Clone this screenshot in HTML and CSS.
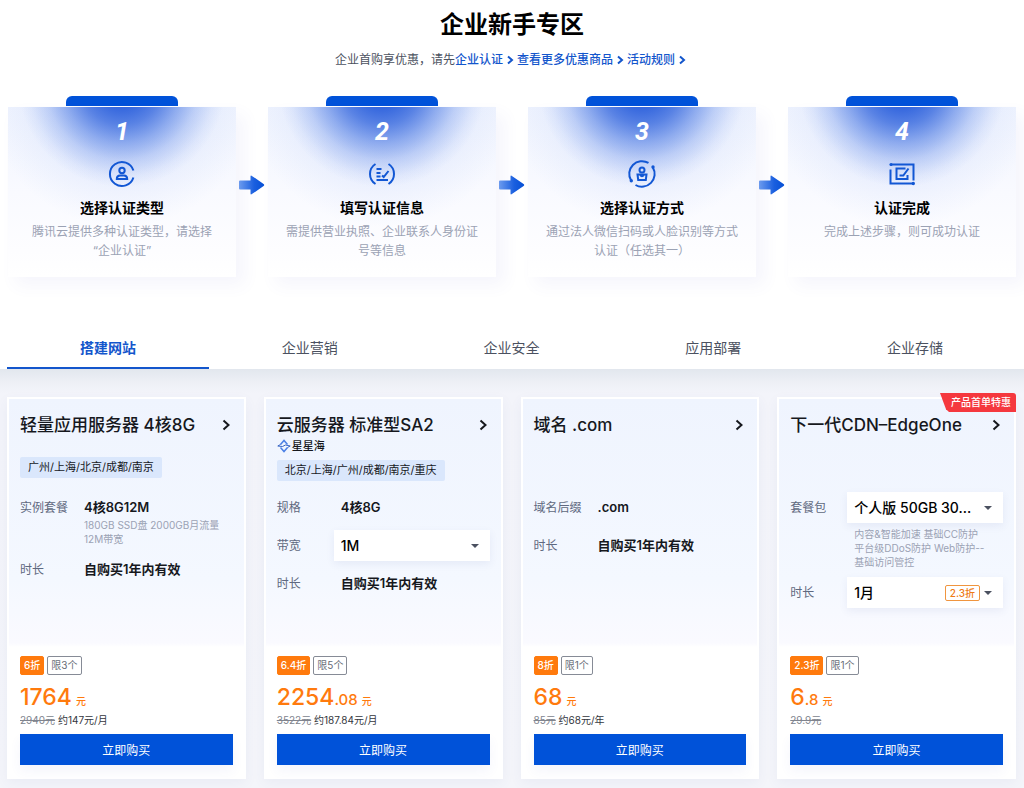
FILE: index.html
```html
<!DOCTYPE html>
<html lang="zh-CN">
<head>
<meta charset="utf-8">
<meta name="viewport" content="width=device-width, initial-scale=1">
<title>企业新手专区</title>
<link rel="stylesheet" href="styles.css">
</head>
<body>
<header class="intro">
  <h1 class="intro-title">企业新手专区</h1>
  <p class="intro-text">企业首购享优惠，请先<a class="link" href="#">企业认证<svg class="link-arrow" viewBox="0 0 12 10"><path d="M4 1.5 8 5 4 8.5"/></svg></a><a class="link" href="#">查看更多优惠商品<svg class="link-arrow" viewBox="0 0 12 10"><path d="M4 1.5 8 5 4 8.5"/></svg></a><a class="link" href="#">活动规则<svg class="link-arrow" viewBox="0 0 12 10"><path d="M4 1.5 8 5 4 8.5"/></svg></a></p>
</header>

<svg class="defs" width="0" height="0" aria-hidden="true">
  <defs>
    <linearGradient id="arrow-fill" x1="0" x2="1" y1="0" y2="0">
      <stop offset="0" stop-color="#6c9bee"/><stop offset=".6" stop-color="#1a5fdf"/><stop offset="1" stop-color="#0650d6"/>
    </linearGradient>
    <symbol id="arrow" viewBox="0 0 26 20">
      <path fill="url(#arrow-fill)" d="M1 5.500h10.500V1.600q0-1.700 1.400-.7l11.700 8.200q1.200.9 0 1.800l-11.700 8.200q-1.400 1-1.400-.7V14.500H1q-1 0-1-1v-7q0-1 1-1z"/>
    </symbol>
  </defs>
</svg>

<ol class="steps">
  <li class="step">
    <div class="step-tab"></div>
    <div class="step-card">
      <span class="step-num">1</span>
      <svg class="step-icon" viewBox="0 0 26 26"><path d="M24.400 9.500A12 12 0 1 0 24.400 16.500"/><circle cx="13" cy="9.500" r="2.700"/><path d="M7.800 18q0-3.600 3.200-3.600h4q3.200 0 3.200 3.600z"/></svg>
      <h2 class="step-title">选择认证类型</h2>
      <p class="step-text">腾讯云提供多种认证类型，请选择“企业认证”</p>
    </div>
  </li>
  <li class="step-arrow" aria-hidden="true"><svg width="26" height="20"><use href="#arrow"/></svg></li>
  <li class="step">
    <div class="step-tab"></div>
    <div class="step-card">
      <span class="step-num">2</span>
      <svg class="step-icon" viewBox="0 0 26 26"><path d="M6.500 3Q1 6.500 1 13t5.500 10M19.500 3Q25 6.500 25 13t-5.500 10M7.500 8h5M7.500 12h4M7.500 15.500h4M7.500 19h11.500M13 14.500l1.700 1.500L19.500 10"/></svg>
      <h2 class="step-title">填写认证信息</h2>
      <p class="step-text">需提供营业执照、企业联系人身份证号等信息</p>
    </div>
  </li>
  <li class="step-arrow" aria-hidden="true"><svg width="26" height="20"><use href="#arrow"/></svg></li>
  <li class="step">
    <div class="step-tab"></div>
    <div class="step-card">
      <span class="step-num">3</span>
      <svg class="step-icon" viewBox="0 0 26 26"><path d="M19.500 1.900A12.800 12.800 0 0 0 2.100 19.600M23.900 6.400A12.800 12.800 0 0 1 6.500 24"/><circle class="dot" cx="24" cy="6" r="1.700"/><circle class="dot" cx="2.300" cy="19.800" r="1.700"/><circle cx="13" cy="9" r="2.500"/><path d="M8.500 13.500h9l-.7 5.500H9.200zM11 13.500q2 3.400 4 0"/></svg>
      <h2 class="step-title">选择认证方式</h2>
      <p class="step-text">通过法人微信扫码或人脸识别等方式认证（任选其一）</p>
    </div>
  </li>
  <li class="step-arrow" aria-hidden="true"><svg width="26" height="20"><use href="#arrow"/></svg></li>
  <li class="step">
    <div class="step-tab"></div>
    <div class="step-card">
      <span class="step-num">4</span>
      <svg class="step-icon" viewBox="0 0 26 26"><path d="M2 3.500h22.500v16M24 22.500H1.500V8.500"/><circle class="dot" cx="2" cy="3.500" r="1.600"/><circle class="dot" cx="24.300" cy="22.500" r="1.700"/><path d="M16.500 7.500H7.500v10.500h11V14M10.500 14.500h3.800l5.200-7"/></svg>
      <h2 class="step-title">认证完成</h2>
      <p class="step-text">完成上述步骤，则可成功认证</p>
    </div>
  </li>
</ol>

<nav class="tabs">
  <a class="tab tab-active" href="#">搭建网站</a>
  <a class="tab" href="#">企业营销</a>
  <a class="tab" href="#">企业安全</a>
  <a class="tab" href="#">应用部署</a>
  <a class="tab" href="#">企业存储</a>
</nav>

<main class="products">
  <article class="card">
    <div class="card-head">
      <h3 class="card-title"><a href="#">轻量应用服务器 4核8G<svg class="chevron" viewBox="0 0 14 14"><path d="M4.500 2.500 9.500 7l-5 4.500"/></svg></a></h3>
      <span class="regions">广州/上海/北京/成都/南京</span>
    </div>
    <dl class="specs">
      <div class="spec"><dt>实例套餐</dt><dd>4核8G12M<p class="note note-tight">180GB SSD盘 2000GB月流量12M带宽</p></dd></div>
      <div class="spec"><dt>时长</dt><dd>自购买1年内有效</dd></div>
    </dl>
    <div class="badges"><span class="badge badge-off">6折</span><span class="badge">限3个</span></div>
    <p class="price"><span>1764</span><small class="unit">元</small></p>
    <p class="was"><s>2940元</s> 约147元/月</p>
    <button class="buy" type="button">立即购买</button>
  </article>

  <article class="card">
    <div class="card-head">
      <h3 class="card-title"><a href="#">云服务器 标准型SA2<svg class="chevron" viewBox="0 0 14 14"><path d="M4.500 2.500 9.500 7l-5 4.500"/></svg></a></h3>
      <p class="series"><svg class="series-icon" viewBox="0 0 14 14"><path d="M3.500 5.500 7 1.500l3.500 4M3.500 8.500 7 12.500l3.500-4"/><path class="series-orbit" d="M3.500 5.500.8 7l4.700.5 3-1.500 4.700 1-2.700 1.500"/></svg>星星海</p>
      <span class="regions">北京/上海/广州/成都/南京/重庆</span>
    </div>
    <dl class="specs">
      <div class="spec"><dt>规格</dt><dd>4核8G</dd></div>
      <div class="spec"><dt><label for="bandwidth">带宽</label></dt><dd><div class="picker"><select id="bandwidth"><option>1M</option></select></div></dd></div>
      <div class="spec"><dt>时长</dt><dd>自购买1年内有效</dd></div>
    </dl>
    <div class="badges"><span class="badge badge-off">6.4折</span><span class="badge">限5个</span></div>
    <p class="price"><span>2254<span class="cents">.08</span></span><small class="unit">元</small></p>
    <p class="was"><s>3522元</s> 约187.84元/月</p>
    <button class="buy" type="button">立即购买</button>
  </article>

  <article class="card">
    <div class="card-head">
      <h3 class="card-title"><a href="#">域名 .com<svg class="chevron" viewBox="0 0 14 14"><path d="M4.500 2.500 9.500 7l-5 4.500"/></svg></a></h3>
    </div>
    <dl class="specs">
      <div class="spec"><dt>域名后缀</dt><dd>.com</dd></div>
      <div class="spec"><dt>时长</dt><dd>自购买1年内有效</dd></div>
    </dl>
    <div class="badges"><span class="badge badge-off">8折</span><span class="badge">限1个</span></div>
    <p class="price"><span>68</span><small class="unit">元</small></p>
    <p class="was"><s>85元</s> 约68元/年</p>
    <button class="buy" type="button">立即购买</button>
  </article>

  <article class="card">
    <span class="ribbon">产品首单特惠</span>
    <div class="card-head">
      <h3 class="card-title"><a href="#">下一代CDN–EdgeOne<svg class="chevron" viewBox="0 0 14 14"><path d="M4.500 2.500 9.500 7l-5 4.500"/></svg></a></h3>
    </div>
    <dl class="specs">
      <div class="spec"><dt><label for="plan">套餐包</label></dt><dd><div class="picker"><select id="plan"><option>个人版 50GB 30...</option></select></div><p class="note">内容&amp;智能加速 基础CC防护<br>平台级DDoS防护 Web防护--<br>基础访问管控</p></dd></div>
      <div class="spec"><dt><label for="term">时长</label></dt><dd><div class="picker"><select id="term"><option>1月</option></select><span class="picker-tag">2.3折</span></div></dd></div>
    </dl>
    <div class="badges"><span class="badge badge-off">2.3折</span><span class="badge">限1个</span></div>
    <p class="price"><span>6<span class="cents">.8</span></span><small class="unit">元</small></p>
    <p class="was"><s>29.9元</s></p>
    <button class="buy" type="button">立即购买</button>
  </article>
</main>
</body>
</html>
```
FILE: styles.css
```css
:root {
  --blue: #0052d9;
  --orange: #ff7a0d;
  --ink: #16181d;
  --muted: #9ba2b4;
}

* { box-sizing: border-box; }

body {
  display: flex;
  flex-direction: column;
  min-height: 100vh;
  margin: 0;
  background: #fff;
  color: var(--ink);
  font-family: Inter, "Noto Sans CJK SC", sans-serif;
  font-size: 12px;
}

h1, h2, h3, p, ol, dl, dd { margin: 0; padding: 0; }
a { color: inherit; text-decoration: none; }
.defs { position: absolute; }

/* Intro */
.intro { padding-top: 8px; text-align: center; }
.intro-title { color: #000; font-size: 24px; line-height: 34px; font-weight: 700; }
.intro-text { margin-top: 8px; line-height: 20px; color: #4b5160; }
.link { color: #1356cc; font-weight: 500; }
.link-arrow { width: 14px; height: 10px; vertical-align: -1px; fill: none; stroke: currentColor; stroke-width: 2; }

/* Steps */
.steps { display: flex; margin-top: 26px; padding: 0 8px; list-style: none; }
.step { flex: 1; display: flex; flex-direction: column; align-items: center; gap: 1px; }
.step-tab { width: 112px; height: 10px; border-radius: 6px 6px 0 0; background: var(--blue); }
.step-card {
  display: flex;
  flex-direction: column;
  align-items: center;
  width: 100%;
  min-height: 170px;
  padding: 13px 16px 16px;
  background:
    radial-gradient(ellipse 104px 104px at 50% -24px, #2a5fdc 0%, #3668de 24%, rgba(54, 104, 222, .78) 40%, rgba(60, 110, 225, .48) 58%, rgba(70, 118, 228, .24) 74%, rgba(80, 125, 230, .07) 90%, rgba(80, 125, 230, 0) 100%),
    radial-gradient(ellipse 130px 120px at 50% 0, rgba(130, 162, 240, .34), rgba(150, 178, 245, .14) 60%, rgba(190, 206, 250, 0)),
    linear-gradient(#f0f4fe, #f9faff 50%, #fdfdff 85%, #fff);
  box-shadow: 8px 8px 16px rgba(90, 90, 200, .06);
  text-align: center;
}
.step-num { color: #fff; font-family: Roboto, sans-serif; font-size: 25px; line-height: 24px; font-weight: 700; font-style: italic; }
.step-icon { width: 26px; height: 26px; margin-top: 17px; overflow: visible; fill: none; stroke: #1257d4; stroke-width: 2; }
.step-icon .dot { fill: #1257d4; stroke: none; }
.step-title { margin-top: 11px; color: #000; font-size: 14px; line-height: 20px; font-weight: 700; }
.step-text { margin-top: 4px; color: var(--muted); line-height: 19px; }
.step-arrow { display: flex; flex: 0 0 32px; align-items: center; justify-content: center; padding-bottom: 4px; }

/* Category tabs */
.tabs { display: flex; margin-top: 50px; padding: 0 8px 0 7px; }
.tab { flex: 1; height: 42px; border-bottom: 2px solid transparent; color: #4b5160; font-size: 14px; line-height: 42px; text-align: center; }
.tab-active { border-color: #1356cc; color: #1356cc; font-weight: 700; }

/* Products */
.products {
  flex: 1;
  display: grid;
  grid-template-columns: repeat(4, minmax(0, 1fr));
  gap: 18px;
  align-items: start;
  padding: 28px 8px 9px 7px;
  background: linear-gradient(#e2e7ee, #eef0f6 14px, #f3f4fa 24px, #f4f5fa);
}
.card {
  position: relative;
  display: flex;
  flex-direction: column;
  padding: 14px 11px 12px;
  border: 2px solid #fff;
  background: linear-gradient(#eff4fe, #f4f8ff 180px, #fafaff 244px, #fff 248px);
  box-shadow: 0 4px 12px rgba(60, 80, 150, .06);
}
.card-head { min-height: 79px; }
.card-title { font-size: 17px; line-height: 24px; font-weight: 500; }
.card-title a { display: flex; align-items: center; justify-content: space-between; white-space: nowrap; }
.chevron { width: 14px; height: 14px; fill: none; stroke: var(--ink); stroke-width: 2; }
.series { display: flex; align-items: center; gap: 1px; margin-top: 1px; font-size: 11px; line-height: 16px; font-weight: 500; }
.series-icon { width: 14px; height: 14px; fill: none; stroke: #4b80e6; stroke-width: 1.5; }
.series-orbit { stroke: #3563c4; stroke-width: 1; }
.regions { display: inline-block; margin-top: 20px; padding: 0 8px; border-radius: 2px; background: #dae7fc; font-size: 11px; line-height: 21px; white-space: nowrap; }
.series + .regions { margin-top: 6px; }

.specs { display: flex; flex-direction: column; gap: 7px; min-height: 164px; }
.spec { display: grid; grid-template-columns: 64px minmax(0, 1fr); line-height: 31px; }
.spec dt { color: #5f6980; }
.spec dd { font-size: 13px; font-weight: 600; }
.note { margin-top: 4px; padding-bottom: 1px; color: var(--muted); font-size: 10px; line-height: 14px; font-weight: 400; }
.note-tight { margin-top: -5px; }

.picker { position: relative; margin-left: -7px; background: #fff; box-shadow: 0 3px 8px rgba(60, 80, 150, .08); }
.picker select {
  display: block;
  width: 100%;
  height: 31px;
  padding: 0 28px 0 7px;
  border: 0;
  background: transparent;
  color: #000;
  font: 500 14px Inter, "Noto Sans CJK SC", sans-serif;
  appearance: none;
}
.picker::after {
  content: "";
  position: absolute;
  top: 14px;
  right: 11px;
  border: 4px solid transparent;
  border-top-color: #4b5160;
  border-bottom: 0;
  pointer-events: none;
}
.picker-tag { position: absolute; top: 8px; right: 23px; padding: 0 4px; border: 1px solid #f0953f; border-radius: 2px; color: #ee7a16; font-size: 10px; line-height: 14px; font-weight: 500; pointer-events: none; }

.ribbon {
  position: absolute;
  top: -6px;
  right: -2px;
  padding: 0 5px 0 11px;
  border-radius: 0 3px 0 0;
  background: #f5383e;
  clip-path: polygon(0 0, 100% 0, 100% 100%, 9px 100%, 6px 85%);
  color: #fff;
  font-size: 10px;
  line-height: 19px;
  font-weight: 500;
}

.badges { display: flex; gap: 3px; }
.badge { padding: 0 3px; border: 1px solid #868b96; border-radius: 2px; color: #666b76; font-size: 10px; line-height: 17px; }
.badge-off { border-color: var(--orange); background: var(--orange); color: #fff; font-weight: 500; }
.price { display: flex; align-items: baseline; gap: 4px; height: 28px; margin-top: 8px; color: var(--orange); font-size: 23px; line-height: 28px; font-weight: 500; }
.cents { font-size: 15px; }
.unit { font-size: 10px; }
.was { margin-top: 1px; color: #33363d; font-size: 10px; line-height: 16px; }
.was s { color: #80848e; }
.buy { height: 31px; margin-top: 6px; padding: 0; border: 0; background: var(--blue); box-shadow: 0 6px 12px rgba(60, 80, 200, .06); color: #fff; font: 12px Inter, "Noto Sans CJK SC", sans-serif; cursor: pointer; }

@media (max-width: 860px) {
  .steps { flex-direction: column; gap: 16px; }
  .step-arrow { display: none; }
  .products { grid-template-columns: repeat(auto-fit, minmax(238px, 1fr)); }
}
```
